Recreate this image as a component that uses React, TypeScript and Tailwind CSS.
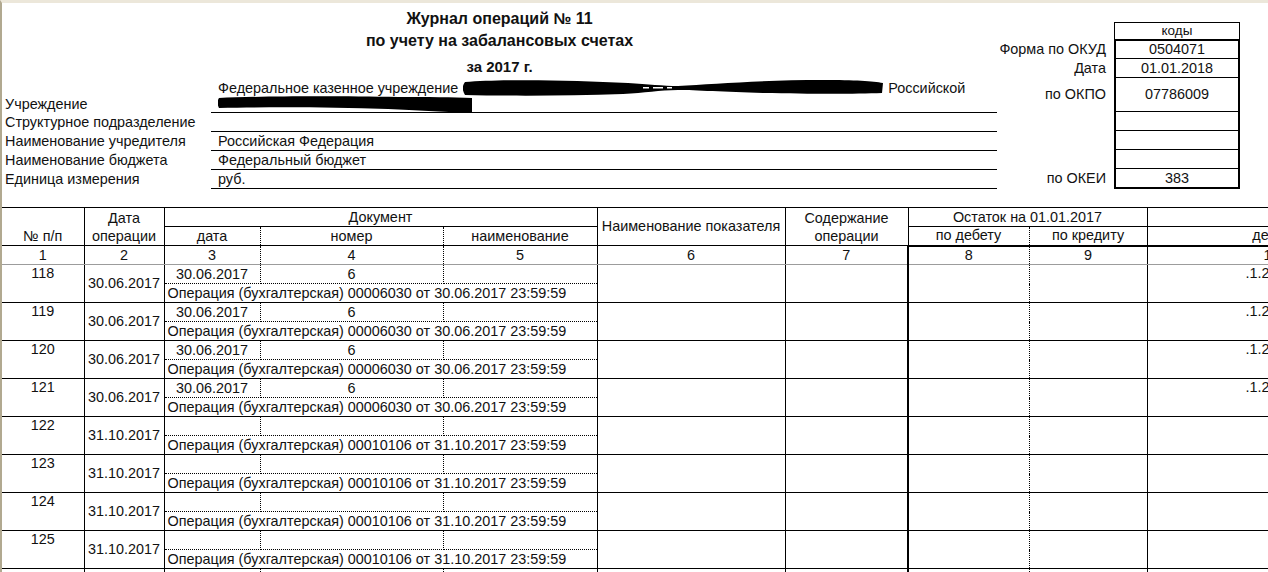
import { Fragment } from "react";

type Rec = {
  n: string;
  date: string;
  docDate: string;
  docNum: string;
  op: string;
  extra: string;
};

const op1 = "Операция (бухгалтерская) 00006030 от 30.06.2017 23:59:59";
const op2 = "Операция (бухгалтерская) 00010106 от 31.10.2017 23:59:59";

const records: Rec[] = [
  { n: "118", date: "30.06.2017", docDate: "30.06.2017", docNum: "6", op: op1, extra: ".1.2" },
  { n: "119", date: "30.06.2017", docDate: "30.06.2017", docNum: "6", op: op1, extra: ".1.2" },
  { n: "120", date: "30.06.2017", docDate: "30.06.2017", docNum: "6", op: op1, extra: ".1.2" },
  { n: "121", date: "30.06.2017", docDate: "30.06.2017", docNum: "6", op: op1, extra: ".1.2" },
  { n: "122", date: "31.10.2017", docDate: "", docNum: "", op: op2, extra: "" },
  { n: "123", date: "31.10.2017", docDate: "", docNum: "", op: op2, extra: "" },
  { n: "124", date: "31.10.2017", docDate: "", docNum: "", op: op2, extra: "" },
  { n: "125", date: "31.10.2017", docDate: "", docNum: "", op: op2, extra: "" },
  { n: "", date: "", docDate: "", docNum: "", op: "", extra: "" },
];

const formRows: [string, string][] = [
  ["Структурное подразделение", ""],
  ["Наименование учредителя", "Российская Федерация"],
  ["Наименование бюджета", "Федеральный бюджет"],
  ["Единица измерения", "руб."],
];

const td = "border border-black p-0 text-center whitespace-nowrap overflow-hidden";

function Scribble1() {
  // зачёркнутое название учреждения, первая строка
  return (
    <svg width="421" height="20" viewBox="0 0 421 20" className="ml-[5px] shrink-0">
      <path
        d="M2,4 C40,1 110,2 165,5 C185,6 200,8 215,8 C250,6 300,2 360,2 C392,2 410,3 420,5 L419,15 C392,16 350,16 300,15 C262,14 232,12 215,12 C196,12 182,15 160,16 C105,18 45,18 2,17 C-1,12 -1,8 2,4 Z"
        fill="#000"
      />
      <rect x="180" y="9" width="6" height="1.5" fill="#fff" />
      <rect x="190" y="9" width="10" height="1.5" fill="#fff" />
      <rect x="204" y="9" width="5" height="1.5" fill="#fff" />
    </svg>
  );
}

function Scribble2() {
  return (
    <svg width="255" height="18" viewBox="0 0 255 18" className="block">
      <path
        d="M1,2 C40,0 120,0 180,1 C210,1 235,1 254,2 L254,17 C220,16 200,14 170,13 C110,11 50,11 1,12 C-1,8 -1,5 1,2 Z"
        fill="#000"
      />
    </svg>
  );
}

export default function App() {
  return (
    <div className="w-[1268px] h-[572px] overflow-hidden bg-white border-t-[3px] border-t-[#ece7da] border-l-2 border-l-[#b1a990] font-['Liberation_Sans',Arial,sans-serif] text-[14.4px] text-[#111]">
      {/* шапка */}
      <div className="flex h-[204px]">
        <div className="w-[995px] flex flex-col shrink-0">
          <div className="pt-[5px] text-center font-bold text-[16px] leading-[22px]">
            <div>Журнал операций № 11</div>
            <div>по учету на забалансовых счетах</div>
            <div className="mt-[6px] leading-[18px] text-[15px]">за 2017 г.</div>
          </div>
          <div className="mt-[2px] grid grid-cols-[209px_786px] leading-[16px]">
            <div className="h-[35px] flex items-end pl-[3px] pb-[1px]">Учреждение</div>
            <div className="h-[35px] border-b border-black pl-[7px] pt-[2px]">
              <div className="flex items-center h-[16px] whitespace-nowrap">
                <span>Федеральное казенное учреждение</span>
                <Scribble1 />
                <span className="ml-[4px]">Российской</span>
              </div>
              <div className="h-[16px]">
                <Scribble2 />
              </div>
            </div>
            {formRows.map(([label, value]) => (
              <Fragment key={label}>
                <div className="h-[19px] pl-[3px] leading-[19px]">{label}</div>
                <div className="h-[19px] border-b border-black pl-[7px] leading-[19px]">{value}</div>
              </Fragment>
            ))}
          </div>
        </div>

        <div className="flex pt-[19px]">
          <div className="w-[117px] flex flex-col text-right pr-[8px]">
            <div className="h-[19px]" />
            <div className="h-[18px] leading-[17px]">Форма по ОКУД</div>
            <div className="h-[19px] leading-[18px]">Дата</div>
            <div className="h-[34px] leading-[33px]">по ОКПО</div>
            <div className="h-[19px]" />
            <div className="h-[19px]" />
            <div className="h-[19px]" />
            <div className="h-[18px] leading-[18px]">по ОКЕИ</div>
          </div>
          <div className="w-[126px] flex flex-col text-center">
            <div className="h-[17px] border-t border-x border-black leading-[16px] text-[13.5px]">коды</div>
            <div className="border-2 border-black">
              <div className="h-[18px] border-b border-black leading-[17px]">0504071</div>
              <div className="h-[19px] border-b border-black leading-[18px]">01.01.2018</div>
              <div className="h-[34px] border-b border-black leading-[33px]">07786009</div>
              <div className="h-[19px] border-b border-black" />
              <div className="h-[19px] border-b border-black" />
              <div className="h-[19px] border-b border-black" />
              <div className="h-[18px] leading-[18px]">383</div>
            </div>
          </div>
        </div>
      </div>

      {/* таблица */}
      <table className="table-fixed border-collapse w-[1394px] leading-[17px]">
        <colgroup>
          <col className="w-[82px]" />
          <col className="w-[80px]" />
          <col className="w-[96px]" />
          <col className="w-[183px]" />
          <col className="w-[154px]" />
          <col className="w-[188px]" />
          <col className="w-[123px]" />
          <col className="w-[121px]" />
          <col className="w-[118px]" />
          <col className="w-[249px]" />
        </colgroup>
        <tbody>
          <tr className="h-[19px]">
            <td rowSpan={2} className={`${td} border-l-0 align-bottom`}>№ п/п</td>
            <td rowSpan={2} className={`${td} leading-[18px]`}>Дата<br />операции</td>
            <td colSpan={3} className={td}>Документ</td>
            <td rowSpan={2} className={td}>Наименование показателя</td>
            <td rowSpan={2} className={`${td} leading-[18px]`}>Содержание<br />операции</td>
            <td colSpan={2} className={td}>Остаток на 01.01.2017</td>
            <td className={td} />
          </tr>
          <tr className="h-[19px]">
            <td className={`${td} [border-right-style:dotted]`}>дата</td>
            <td className={`${td} [border-left-style:dotted] [border-right-style:dotted]`}>номер</td>
            <td className={`${td} [border-left-style:dotted]`}>наименование</td>
            <td className={`${td} [border-right-style:dotted]`}>по дебету</td>
            <td className={`${td} [border-left-style:dotted]`}>по кредиту</td>
            <td className={td}>дебет</td>
          </tr>
          <tr className="h-[19px]">
            <td className={`${td} border-l-0 border-b-[#9c9c9c]`}>1</td>
            <td className={`${td} border-b-[#9c9c9c]`}>2</td>
            <td className={`${td} border-b-[#9c9c9c] [border-right-style:dotted]`}>3</td>
            <td className={`${td} border-b-[#9c9c9c] [border-left-style:dotted] [border-right-style:dotted]`}>4</td>
            <td className={`${td} border-b-[#9c9c9c] [border-left-style:dotted]`}>5</td>
            <td className={`${td} border-b-[#9c9c9c]`}>6</td>
            <td className={`${td} border-b-[#9c9c9c]`}>7</td>
            <td className={`${td} border-b-[#9c9c9c] border-t-2 border-l-2 [border-right-style:dotted]`}>8</td>
            <td className={`${td} border-b-[#9c9c9c] border-t-2 [border-left-style:dotted]`}>9</td>
            <td className={`${td} border-b-[#9c9c9c] border-t-2`}>10</td>
          </tr>
          {records.map((r, i) => (
            <Fragment key={i}>
              <tr className="h-[19px]">
                <td rowSpan={2} className={`${td} border-l-0 align-top`}>{r.n}</td>
                <td rowSpan={2} className={td}>{r.date}</td>
                <td className={`${td} [border-right-style:dotted] [border-bottom-style:dotted]`}>{r.docDate}</td>
                <td className={`${td} [border-left-style:dotted] [border-right-style:dotted] [border-bottom-style:dotted]`}>{r.docNum}</td>
                <td className={`${td} [border-left-style:dotted] [border-bottom-style:dotted]`} />
                <td rowSpan={2} className={td} />
                <td rowSpan={2} className={td} />
                <td rowSpan={2} className={`${td} border-l-2 [border-right-style:dotted]`} />
                <td rowSpan={2} className={`${td} [border-left-style:dotted]`} />
                <td rowSpan={2} className={`${td} align-top text-left pl-[98px]`}>{r.extra}</td>
              </tr>
              <tr className="h-[19px]">
                <td colSpan={3} className={`${td} text-left pl-[3px] [border-top-style:dotted]`}>{r.op}</td>
              </tr>
            </Fragment>
          ))}
        </tbody>
      </table>
    </div>
  );
}
